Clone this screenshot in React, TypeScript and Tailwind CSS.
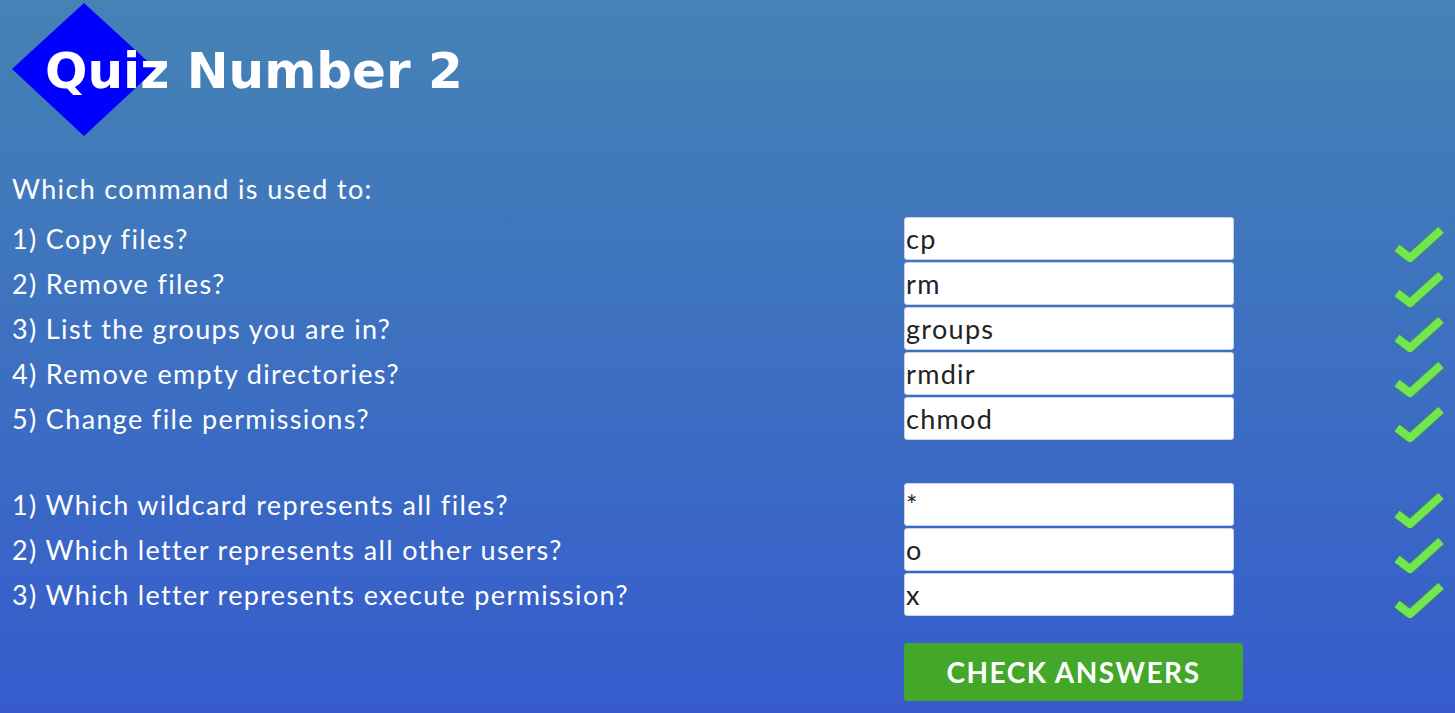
import React from "react";

const Check = () => (
  <svg width="52" height="38" viewBox="0 0 52 38" className="block">
    <path
      d="M4 24 L17 34 L48 6"
      fill="none"
      stroke="#3e9a2a"
      strokeWidth="10"
      strokeLinejoin="miter"
      strokeLinecap="butt"
      opacity="0.5"
    />
    <path
      d="M4 24 L17 34 L48 6"
      fill="none"
      stroke="#72e64f"
      strokeWidth="8"
      strokeLinejoin="miter"
      strokeLinecap="butt"
    />
  </svg>
);

const Row = ({ q, a }: { q: string; a: string }) => (
  <div className="flex h-[43px] items-center">
    <div className="w-[904px] shrink-0 pl-[12px] text-[27px] leading-[31px] tracking-[1.35px] text-white">{q}</div>
    <input
      readOnly
      value={a}
      className="h-[43px] w-[330px] shrink-0 rounded-[3px] border border-[#c9d3e6] bg-white pl-[1px] text-[27px] tracking-[1.3px] text-[#222] outline-none"
      style={{ fontFamily: "Lato, sans-serif" }}
    />
    <div className="ml-[159px] mt-[8px] shrink-0 self-center">
      <Check />
    </div>
  </div>
);

export default function App() {
  const g1 = [
    ["1) Copy files?", "cp"],
    ["2) Remove files?", "rm"],
    ["3) List the groups you are in?", "groups"],
    ["4) Remove empty directories?", "rmdir"],
    ["5) Change file permissions?", "chmod"],
  ];
  const g2 = [
    ["1) Which wildcard represents all files?", "*"],
    ["2) Which letter represents all other users?", "o"],
    ["3) Which letter represents execute permission?", "x"],
  ];
  return (
    <div
      className="h-[713px] w-full overflow-hidden bg-gradient-to-b from-[#4682b4] to-[#375bcd]"
      style={{ fontFamily: "Lato, 'Open Sans', sans-serif" }}
    >
      <div className="relative h-[140px]">
        <svg className="absolute left-[12px] top-[3px]" width="144" height="133" viewBox="0 0 144 133">
          <polygon points="72,0 144,66 72,133 0,66" fill="#0000fe" />
        </svg>
        <h1
          className="absolute left-[45px] top-[41px] text-[50px] font-bold leading-[60px] text-white"
          style={{ fontFamily: "'DejaVu Sans', sans-serif" }}
        >
          Quiz Number 2
        </h1>
      </div>
      <p className="mt-[33px] pl-[12px] text-[27px] leading-[31px] tracking-[1.35px] text-white">
        Which command is used to:
      </p>
      <div className="mt-[13px] flex flex-col gap-[2px]">
        {g1.map(([q, a]) => (
          <Row key={q} q={q} a={a} />
        ))}
      </div>
      <div className="mt-[43px] flex flex-col gap-[2px]">
        {g2.map(([q, a]) => (
          <Row key={q} q={q} a={a} />
        ))}
      </div>
      <div className="mt-[27px] pl-[904px]">
        <button className="h-[58px] w-[339px] rounded-[3px] bg-[#43a72a] text-[28px] font-bold tracking-[1.5px] text-white">
          CHECK ANSWERS
        </button>
      </div>
    </div>
  );
}
